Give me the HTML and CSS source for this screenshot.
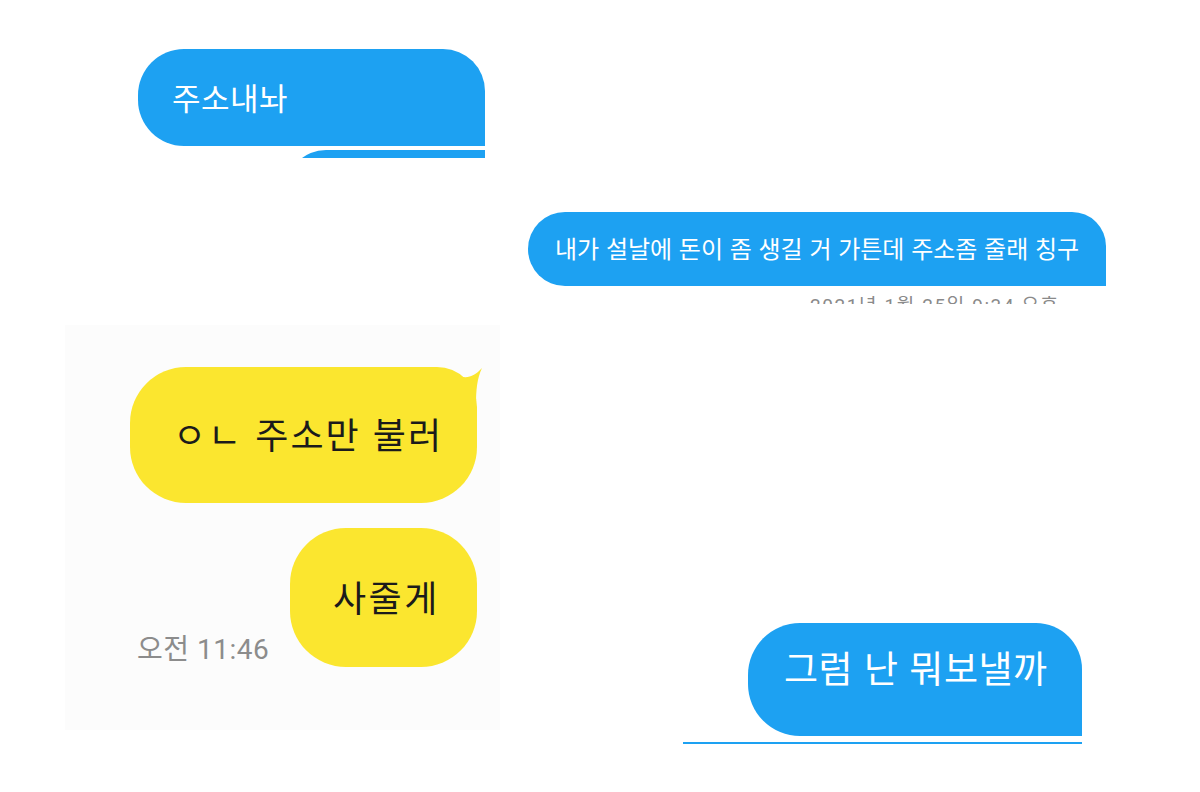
FILE: index.html
```html
<!DOCTYPE html>
<html lang="ko">
<head>
<meta charset="utf-8">
<title>chat collage</title>
<link rel="stylesheet" href="styles.css">
</head>
<body>
<main class="canvas">
  <section class="piece piece-a">
    <div class="tw-bubble tw-a">주소내놔</div>
    <div class="tw-bubble tw-a2"></div>
  </section>

  <section class="piece piece-b">
    <div class="tw-bubble tw-b">내가 설날에 돈이 좀 생길 거 가튼데 주소좀 줄래 칭구</div>
    <div class="stamp-clip"><span class="stamp">2021년 1월 25일 9:34 오후</span></div>
  </section>

  <section class="piece piece-c">
    <div class="kk-bubble kk-1">
      <span>ㅇㄴ 주소만 불러</span>
      <svg class="kk-tail" width="48" height="40" viewBox="0 0 48 40"><path d="M12 2 C26 14 36 12 46 1 C41 12 40 22 40 40 L12 40 Z" fill="#fbe62f"/></svg>
    </div>
    <div class="kk-row">
      <div class="kk-time">오전 11:46</div>
      <div class="kk-bubble kk-2">사줄게</div>
    </div>
  </section>

  <section class="piece piece-d">
    <div class="tw-bubble tw-d">그럼 난 뭐보낼까</div>
    <div class="tw-line"></div>
  </section>
</main>
</body>
</html>
```

FILE: styles.css
```css
* { box-sizing: border-box; }
html, body {
  margin: 0;
  padding: 0;
  background: #ffffff;
}
body {
  font-family: "Noto Sans CJK KR", "Noto Sans", sans-serif;
}
.canvas {
  position: relative;
  width: 1200px;
  height: 792px;
  overflow: hidden;
  background: #ffffff;
}
.piece {
  position: absolute;
}

/* twitter-like blue bubbles */
.tw-bubble {
  background: #1da1f2;
  color: #ffffff;
  display: flex;
  align-items: center;
  white-space: nowrap;
}

.piece-a {
  left: 138px;
  top: 49px;
  width: 347px;
  height: 109px;
  overflow: hidden;
  display: flex;
  flex-direction: column;
  gap: 4px;
}
.tw-a {
  height: 97px;
  border-radius: 46px 42px 0 46px;
  padding: 0 0 3px 34px;
  font-size: 31px;
  letter-spacing: 0.5px;
  flex-shrink: 0;
}
.tw-a2 {
  margin-left: 148px;
  height: 40px;
  border-radius: 44px 0 0 0;
  flex-shrink: 0;
}

.piece-b {
  left: 528px;
  top: 212px;
  width: 578px;
  height: 92px;
  display: flex;
  flex-direction: column;
}
.tw-b {
  height: 74px;
  border-radius: 37px 34px 0 37px;
  padding: 0 0 4px 27px;
  font-size: 24px;
  flex-shrink: 0;
}
.stamp-clip {
  margin-top: 10px;
  height: 8px;
  overflow: hidden;
  padding-left: 282px;
}
.stamp {
  display: block;
  font-family: "Roboto", "Noto Sans CJK KR", sans-serif;
  font-size: 19px;
  line-height: 19px;
  color: #8a8a8a;
  letter-spacing: 1.6px;
}

/* kakao-like yellow bubbles */
.piece-c {
  left: 65px;
  top: 325px;
  width: 435px;
  height: 405px;
  background: #fcfcfc;
  display: flex;
  flex-direction: column;
  padding: 42px 0 0 65px;
}
.kk-bubble {
  background: #fbe62f;
  color: #1b1b1b;
  display: flex;
  align-items: center;
  white-space: nowrap;
  border-radius: 56px;
  font-size: 36px;
}
.kk-1 {
  position: relative;
  width: 347px;
  height: 136px;
  border-top-right-radius: 40px;
  padding: 0 0 4px 43px;
  letter-spacing: 2px;
}
.kk-tail {
  position: absolute;
  right: -7px;
  top: 0;
}
.kk-row {
  margin-top: 25px;
  display: flex;
  align-items: flex-end;
}
.kk-time {
  font-family: "Roboto", "Noto Sans CJK KR", sans-serif;
  font-size: 28px;
  color: #8c8c8c;
  width: 160px;
  padding: 0 0 0 7px;
  line-height: 1;
  letter-spacing: 0.5px;
  transform: translateY(-3px);
}
.kk-2 {
  width: 187px;
  height: 139px;
  padding: 0 0 4px 43px;
  letter-spacing: 2.5px;
}

.piece-d {
  left: 683px;
  top: 623px;
  width: 399px;
  height: 122px;
  display: flex;
  flex-direction: column;
  align-items: flex-end;
}
.tw-d {
  width: 334px;
  height: 113px;
  border-radius: 52px 46px 0 52px;
  padding: 0 0 25px 36px;
  font-size: 37px;
  letter-spacing: 0.5px;
}
.tw-line {
  margin-top: 6px;
  width: 399px;
  height: 2px;
  background: #1da1f2;
}
```
